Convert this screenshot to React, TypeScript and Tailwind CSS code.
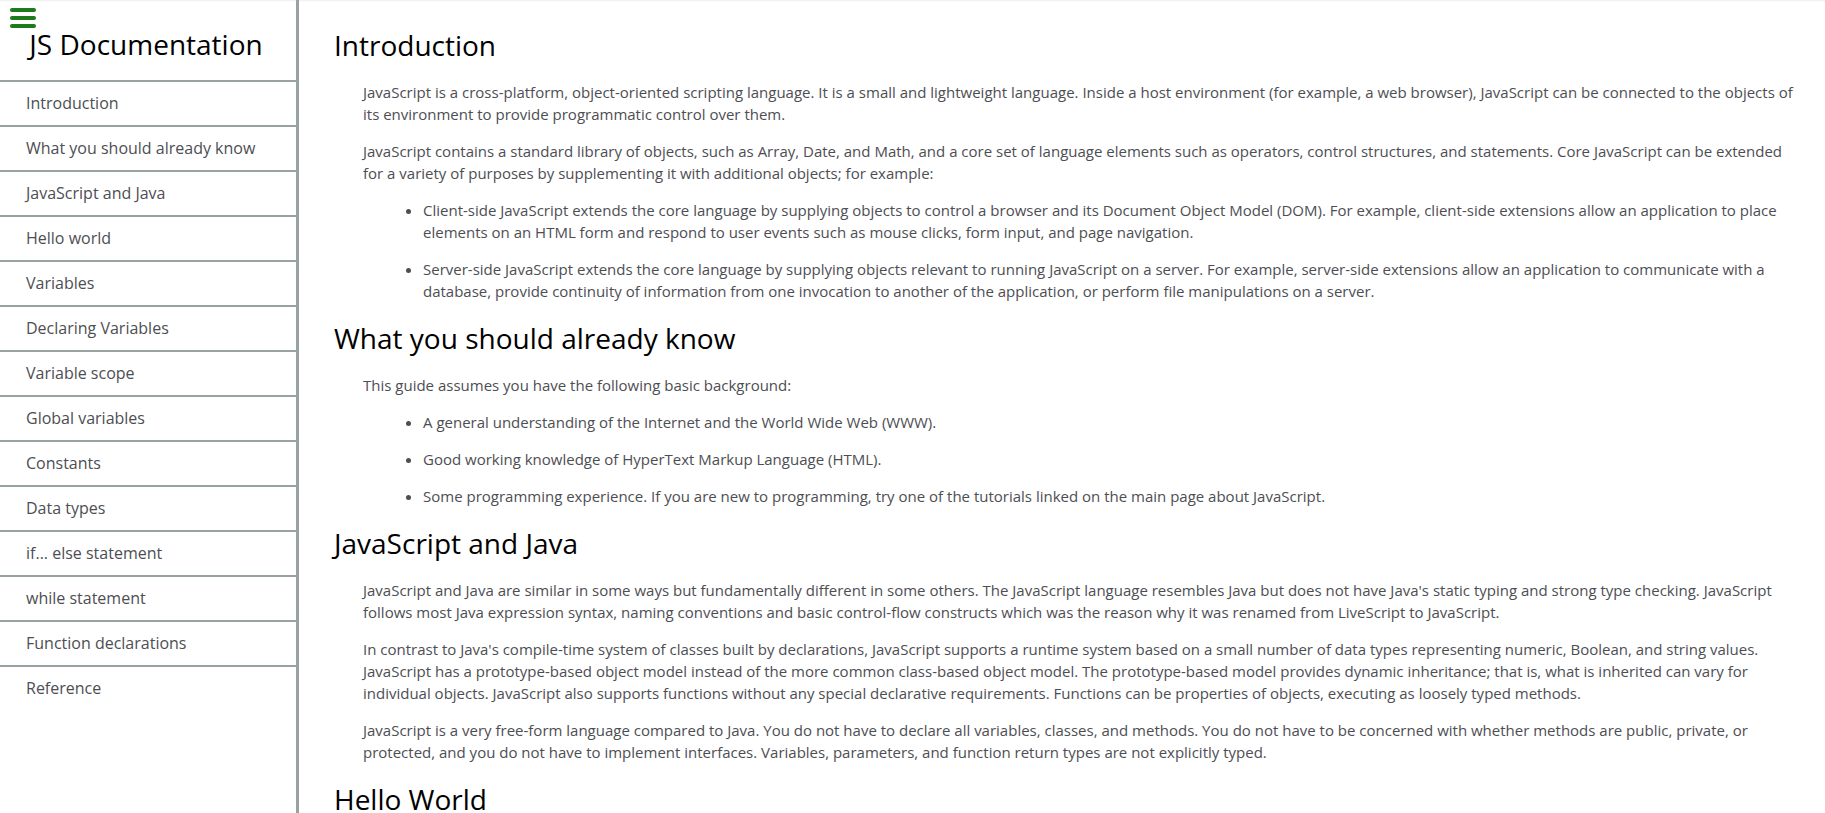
import React from "react";

const navItems = [
  "Introduction",
  "What you should already know",
  "JavaScript and Java",
  "Hello world",
  "Variables",
  "Declaring Variables",
  "Variable scope",
  "Global variables",
  "Constants",
  "Data types",
  "if... else statement",
  "while statement",
  "Function declarations",
  "Reference",
];

function H({ children }: { children: React.ReactNode }) {
  return <h2 className="text-[28px] leading-[42px] font-normal text-black mb-[15px]">{children}</h2>;
}

function P({ children }: { children: React.ReactNode }) {
  return <p className="mb-[15px]">{children}</p>;
}

function UL({ items }: { items: string[] }) {
  return (
    <ul className="list-disc pl-[60px]">
      {items.map((t) => (
        <li key={t} className="mb-[15px]">
          {t}
        </li>
      ))}
    </ul>
  );
}

export default function App() {
  return (
    <div
      className="flex h-screen overflow-hidden bg-white shadow-[inset_0_2px_2px_-1px_rgba(0,0,0,0.07)]"
      style={{ fontFamily: "'Open Sans', 'Liberation Sans', sans-serif" }}
    >
      <nav className="relative w-[299px] shrink-0 h-full border-r-[3px] border-[#99a2a2]">
        <svg className="absolute left-[10px] top-[8px] w-[26px] h-[20px]" viewBox="0 0 26 20">
          <rect x="0" y="0" width="26" height="4" rx="2" fill="#1d7a1d" />
          <rect x="0" y="8" width="26" height="4" rx="2" fill="#1d7a1d" />
          <rect x="0" y="16" width="26" height="4" rx="2" fill="#1d7a1d" />
        </svg>
        <header className="pt-[23px] pb-[15px] pr-[4px] text-center text-[28px] leading-[42px] text-black">
          JS Documentation
        </header>
        <ul>
          {navItems.map((t) => (
            <li key={t} className="border-t-2 border-[#99a2a2]">
              <a className="block px-[26px] py-[10px] text-[16px] leading-[23px] text-[#4d4e53]">{t}</a>
            </li>
          ))}
        </ul>
      </nav>
      <main className="flex-1 min-w-0 overflow-hidden pl-[35px] pr-[25px] pt-[24px] text-[15px] leading-[22px] text-[#4d4e53]">
        <section>
          <H>Introduction</H>
          <div className="pl-[29px]">
            <P>
              JavaScript is a cross-platform, object-oriented scripting language. It is a small and lightweight
              language. Inside a host environment (for example, a web browser), JavaScript can be connected to the
              objects of its environment to provide programmatic control over them.
            </P>
            <P>
              JavaScript contains a standard library of objects, such as Array, Date, and Math, and a core set of
              language elements such as operators, control structures, and statements. Core JavaScript can be
              extended for a variety of purposes by supplementing it with additional objects; for example:
            </P>
            <UL
              items={[
                "Client-side JavaScript extends the core language by supplying objects to control a browser and its Document Object Model (DOM). For example, client-side extensions allow an application to place elements on an HTML form and respond to user events such as mouse clicks, form input, and page navigation.",
                "Server-side JavaScript extends the core language by supplying objects relevant to running JavaScript on a server. For example, server-side extensions allow an application to communicate with a database, provide continuity of information from one invocation to another of the application, or perform file manipulations on a server.",
              ]}
            />
          </div>
        </section>
        <section>
          <H>What you should already know</H>
          <div className="pl-[29px]">
            <P>This guide assumes you have the following basic background:</P>
            <UL
              items={[
                "A general understanding of the Internet and the World Wide Web (WWW).",
                "Good working knowledge of HyperText Markup Language (HTML).",
                "Some programming experience. If you are new to programming, try one of the tutorials linked on the main page about JavaScript.",
              ]}
            />
          </div>
        </section>
        <section>
          <H>JavaScript and Java</H>
          <div className="pl-[29px]">
            <P>
              JavaScript and Java are similar in some ways but fundamentally different in some others. The
              JavaScript language resembles Java but does not have Java's static typing and strong type checking.
              JavaScript follows most Java expression syntax, naming conventions and basic control-flow constructs
              which was the reason why it was renamed from LiveScript to JavaScript.
            </P>
            <P>
              In contrast to Java's compile-time system of classes built by declarations, JavaScript supports a
              runtime system based on a small number of data types representing numeric, Boolean, and string values.
              JavaScript has a prototype-based object model instead of the more common class-based object model. The
              prototype-based model provides dynamic inheritance; that is, what is inherited can vary for individual
              objects. JavaScript also supports functions without any special declarative requirements. Functions can
              be properties of objects, executing as loosely typed methods.
            </P>
            <P>
              JavaScript is a very free-form language compared to Java. You do not have to declare all variables,
              classes, and methods. You do not have to be concerned with whether methods are public, private, or
              protected, and you do not have to implement interfaces. Variables, parameters, and function return
              types are not explicitly typed.
            </P>
          </div>
        </section>
        <section>
          <H>Hello World</H>
        </section>
      </main>
    </div>
  );
}
